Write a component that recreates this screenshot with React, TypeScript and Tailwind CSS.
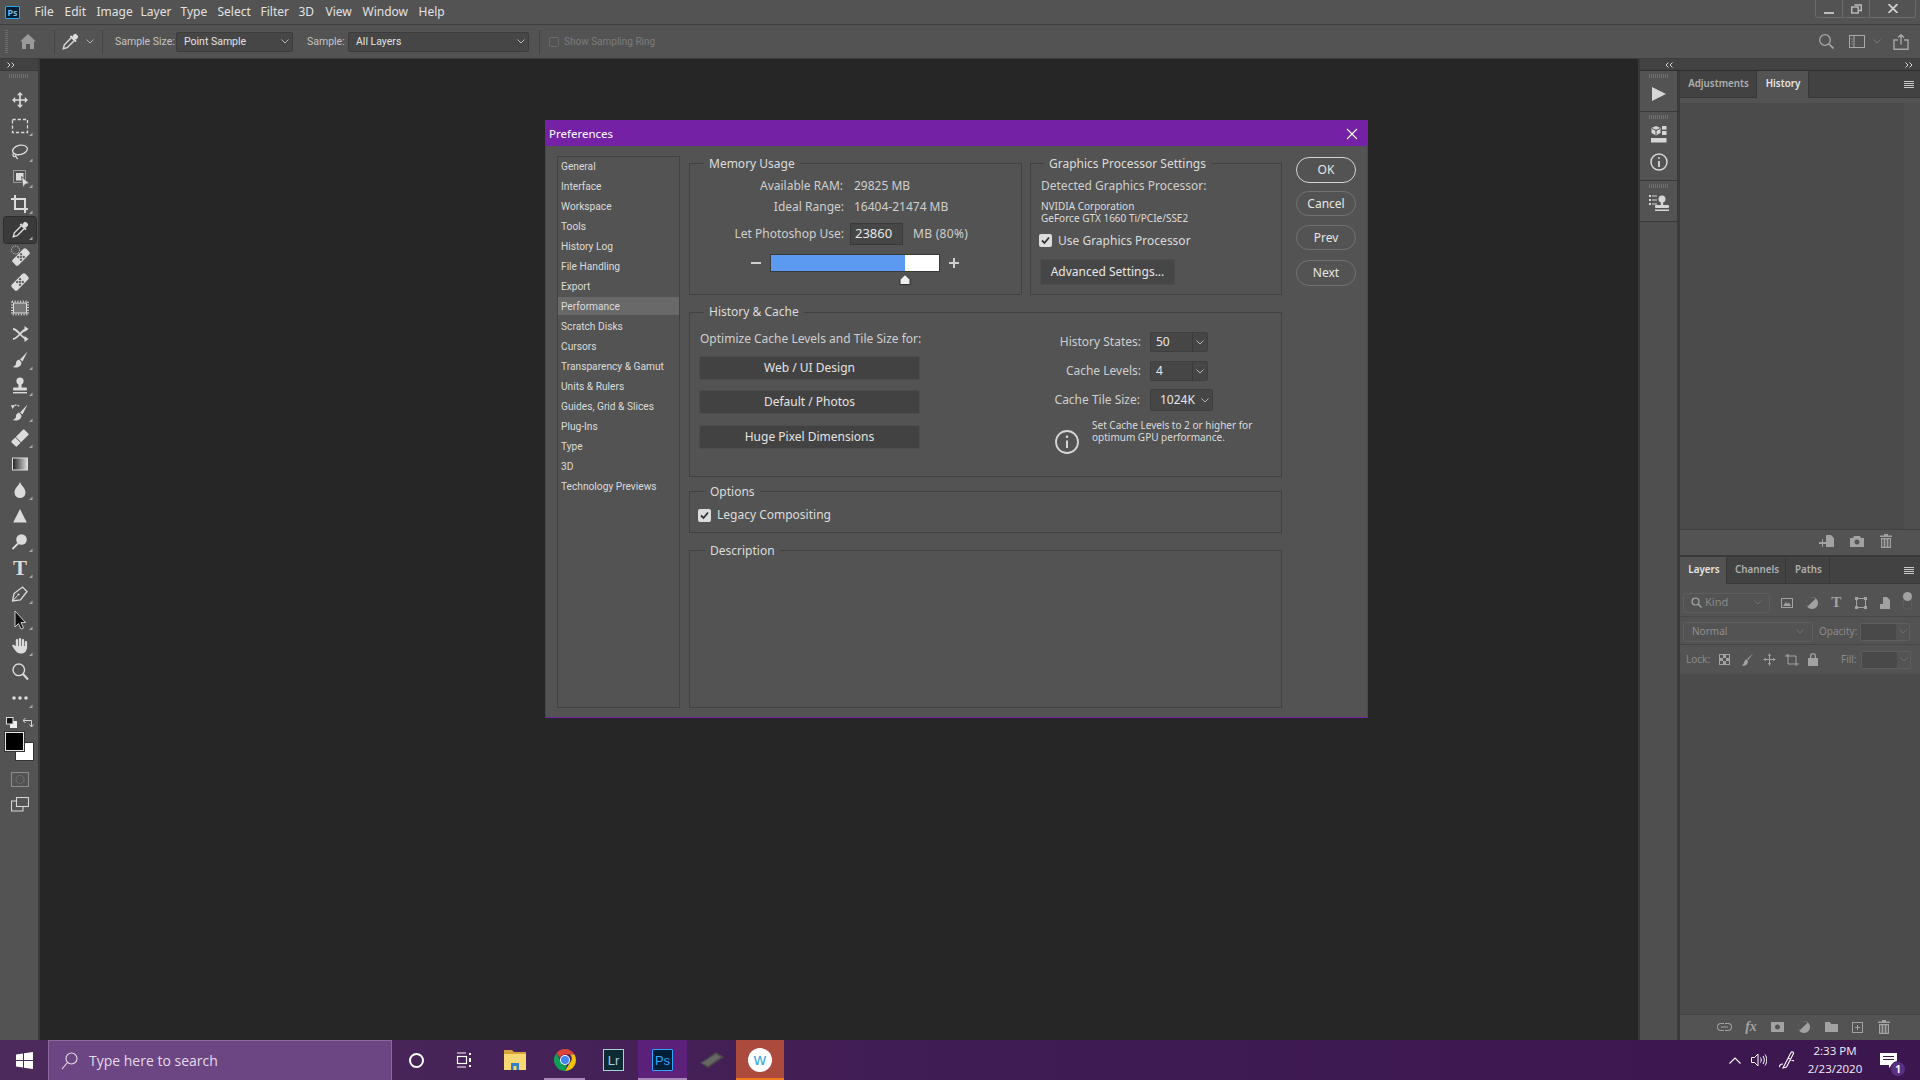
import React from "react";

const FONT = "font-['Noto_Sans','Open_Sans',sans-serif]";

const Tri = () => <path d="M12.5 6.5v3.5H9z" fill="#a8a8a8" stroke="none" />;
const Tool = ({ children, fly = true, sel = false }: { children: React.ReactNode; fly?: boolean; sel?: boolean }) => (
  <div className={`h-[26px] w-[32px] flex items-center justify-center rounded-[2px] ${sel ? "bg-[#3a3a3a] outline outline-1 outline-[#2c2c2c]" : ""}`}>
    <svg width="32" height="26" viewBox="-16 -13 32 26" fill="#dcdcdc" stroke="none">
      {children}
      {fly && <Tri />}
    </svg>
  </div>
);
const S = { stroke: "#dcdcdc", fill: "none" } as const;

const Eyedropper = () => (
  <g transform="rotate(45)">
    <rect x="-2.6" y="-10" width="5.2" height="5" rx="2" />
    <rect x="-4" y="-5.5" width="8" height="2" />
    <path d="M-2 -3.5V6L0 9.5 2 6V-3.5" {...S} strokeWidth="1.4" />
  </g>
);
const Bandage = ({ dx = 0, dy = 0 }: { dx?: number; dy?: number }) => (
  <g transform={`translate(${dx} ${dy}) rotate(-45)`}>
    <rect x="-9.5" y="-4" width="19" height="8" rx="2" />
    <g fill="#535353">
      <rect x="-3" y="-3" width="2" height="2" /><rect x="1" y="-3" width="2" height="2" />
      <rect x="-1" y="-1" width="2" height="2" />
      <rect x="-3" y="1" width="2" height="2" /><rect x="1" y="1" width="2" height="2" />
    </g>
  </g>
);
const BrushShape = () => (
  <g>
    <path d="M7.5 -8.5L2.5 1.5 0 -.5z" />
    <path d="M-1 -.5C-3.5 0-4 2-4 3.5-4 5.5-6 6.5-7.5 7-3 8.5 1.5 6.5 1.5 2.5z" />
  </g>
);

const tools: React.ReactNode[] = [
  <Tool key="move" fly={false}><path d="M0-6V6M-6 0H6" {...S} strokeWidth="1.6" /><path d="M0-8l-3 3.2h6zM0 8l-3-3.2h6zM-8 0l3.2-3v6zM8 0L4.8-3v6z" /></Tool>,
  <Tool key="marquee"><rect x="-7.5" y="-6.5" width="15" height="13" {...S} strokeWidth="1.3" strokeDasharray="3.2 2" /></Tool>,
  <Tool key="lasso"><ellipse cx=".5" cy="-2" rx="7.5" ry="4.6" transform="rotate(-14)" {...S} strokeWidth="1.3" /><path d="M-6 1c-2 1.5-1 4 1 3.5 1-.3 1-2 0-2.5M-4 4c0 1.5 1 2.5 2 3" {...S} strokeWidth="1.2" /></Tool>,
  <Tool key="object"><rect x="-6.5" y="-7.5" width="12" height="12" {...S} strokeWidth="1" strokeDasharray="1 1" /><rect x="-4" y="-5" width="7.5" height="7.5" /><path d="M1.5-1.5l8 7-4 .5-2.5 3.5z" stroke="#535353" strokeWidth=".8" /></Tool>,
  <Tool key="crop"><path d="M-5-9V5H8M-9-5H5V9" {...S} strokeWidth="2" /></Tool>,
  <Tool key="eye" sel><Eyedropper /></Tool>,
  <Tool key="heal" fly={false}><Bandage dx={1} dy={1} /><circle cx="-4.5" cy="-6" r="4" {...S} strokeWidth="1" strokeDasharray="1 1" /></Tool>,
  <Tool key="band" fly={false}><Bandage /></Tool>,
  <Tool key="patch" fly={false}><rect x="-8" y="-6.5" width="16" height="13" {...S} strokeWidth="2" strokeDasharray="1 1.700" /><rect x="-6.500" y="-5" width="13" height="10" fill="#777" stroke="#dcdcdc" strokeWidth="1" /></Tool>,
  <Tool key="shuffle" fly={false}><path d="M-7-5C-2-5 2 5 7 5M-7 5C-2 5 2-5 7-5" {...S} strokeWidth="1.8" /><path d="M8.500-5l-4-3v6zM8.500 5l-4-3v6z" /></Tool>,
  <Tool key="brush"><BrushShape /></Tool>,
  <Tool key="stamp"><circle cx="0" cy="-5" r="3.6" /><rect x="-1.600" y="-2" width="3.2" height="4" /><rect x="-7" y="1.500" width="14" height="3" rx="1" /><rect x="-7" y="6" width="14" height="1.400" /></Tool>,
  <Tool key="hist"><g transform="translate(0 1)"><BrushShape /></g><path d="M-8-5c3-3 6-2 8 0" {...S} strokeWidth="1.200" strokeDasharray="2 1" /><path d="M-9-7l4 .5-2.500 3.500z" /></Tool>,
  <Tool key="eraser"><g transform="rotate(-45)"><rect x="-9" y="-3.800" width="18" height="7.600" rx="1" /><rect x="-3" y="-4" width=".8" height="8" fill="#535353" /></g></Tool>,
  <Tool key="grad" fly={false}><defs><linearGradient id="g1"><stop offset="0" stopColor="#222" /><stop offset="1" stopColor="#ddd" /></linearGradient></defs><rect x="-7.500" y="-6" width="15" height="12" fill="url(#g1)" stroke="#dcdcdc" strokeWidth="1" /></Tool>,
  <Tool key="drop"><path d="M0-8C1.500-4 5.500-2 5.500 2.500A5.500 5.500 0 0 1-5.500 2.500C-5.500-2-1.500-4 0-8z" /></Tool>,
  <Tool key="tri" fly={false}><path d="M0-7L6.800 6.500H-6.800z" /></Tool>,
  <Tool key="dodge"><circle cx="1.500" cy="-2.500" r="5.300" /><path d="M-2 1.500L-7.500 7" {...S} strokeWidth="1.800" /></Tool>,
  <Tool key="type"><text x="0" y="7" textAnchor="middle" fontFamily="'Liberation Serif',serif" fontWeight="700" fontSize="21">T</text></Tool>,
  <Tool key="pen"><path d="M-7.500 7L-6-.500 2.500-7 7-2.500.500 6z" {...S} strokeWidth="1.300" /><path d="M-7 6.500L-2.500 1.500" {...S} strokeWidth="1" /><circle cx="-1.500" cy=".500" r="1.100" /></Tool>,
  <Tool key="arrow"><path d="M-5-9L5.500 2.500H1L3.500 8 1 9-1.500 3.500-5 7z" fill="#111" stroke="#dcdcdc" strokeWidth=".9" /></Tool>,
  <Tool key="hand"><rect x="-4.200" y="-7" width="2.300" height="9" rx="1.100" /><rect x="-1.200" y="-8" width="2.300" height="9" rx="1.100" /><rect x="1.800" y="-7" width="2.300" height="9" rx="1.100" /><rect x="4.800" y="-5" width="2.300" height="8" rx="1.100" /><path d="M-4.500 0H7C7 5 5 7.500 1 7.500-3 7.500-4 5-5.500 3.500L-8-.5C-7-2-5.500-1-4.500 0z" /></Tool>,
  <Tool key="zoom" fly={false}><circle cx="-1.200" cy="-2.200" r="5.800" {...S} strokeWidth="1.400" /><path d="M3 2l5 5.500" {...S} strokeWidth="2" /></Tool>,
  <Tool key="dots"><circle cx="-6" cy="0" r="1.800" /><circle cx="0" cy="0" r="1.800" /><circle cx="6" cy="0" r="1.800" /></Tool>,
];

const menu: [string, string][] = [
  ["File", "w-[30px]"], ["Edit", "w-[32px]"], ["Image", "w-[44px]"], ["Layer", "w-[40px]"], ["Type", "w-[37px]"], ["Select", "w-[43px]"],
  ["Filter", "w-[38px]"], ["3D", "w-[27px]"], ["View", "w-[37px]"], ["Window", "w-[56px]"], ["Help", "w-[30px]"],
];

const prefs = ["General", "Interface", "Workspace", "Tools", "History Log", "File Handling", "Export", "Performance", "Scratch Disks", "Cursors", "Transparency & Gamut", "Units & Rulers", "Guides, Grid & Slices", "Plug-Ins", "Type", "3D", "Technology Previews"];

const Chev = ({ c = "#b5b5b5" }: { c?: string }) => (
  <svg width="8" height="5" viewBox="0 0 8 5" fill="none" stroke={c} strokeWidth="1"><path d="M.5.5L4 4 7.500.5" /></svg>
);

const Group = ({ title, lg, className, children }: { title: string; lg: string; className: string; children?: React.ReactNode }) => (
  <fieldset className={`border border-[#424242] min-w-0 ${className}`}>
    <legend className={`px-[5px] h-[16px] leading-[16px] text-[12px] text-[#dcdcdc] ${lg}`}>{title}</legend>
    {children}
  </fieldset>
);

const Check = () => (
  <span className="w-[13px] h-[13px] rounded-[2px] bg-[#dcdcdc] flex items-center justify-center shrink-0">
    <svg width="9" height="9" viewBox="0 0 9 9" fill="none" stroke="#333" strokeWidth="1.800"><path d="M1 4.500L3.500 7 8 1.500" /></svg>
  </span>
);

const PrefBtn = ({ t, cls }: { t: string; cls: string }) => (
  <div className={`w-[221px] h-[24px] rounded-[2px] bg-[#424242] border border-[#4d4d4d] flex items-center justify-center text-[12px] text-[#e2e2e2] ${cls}`}>{t}</div>
);

const SideBtn = ({ t, ok, cls }: { t: string; ok?: boolean; cls: string }) => (
  <div className={`w-[60px] rounded-full flex items-center justify-center text-[12px] text-[#e6e6e6] ${ok ? "border-[1.5px] border-[#d4d4d4]" : "border border-[#727272]"} ${cls}`}>{t}</div>
);

const Combo = ({ v, split, cls }: { v: string; split?: boolean; cls: string }) => (
  <div className={`bg-[#464646] border border-[#3f3f3f] rounded-[2px] flex items-center text-[12px] text-[#e6e6e6] ${cls}`}>
    {split ? (
      <>
        <span className="flex-1 pl-[5px]">{v}</span>
        <span className="w-[15px] h-full border-l border-[#3a3a3a] flex items-center justify-center"><Chev /></span>
      </>
    ) : (
      <>
        <span className="flex-1 pl-[9px]">{v}</span>
        <span className="pr-[3px]"><Chev /></span>
      </>
    )}
  </div>
);

const Dialog = () => (
  <div className="absolute left-[545px] top-[120px] w-[823px] h-[598px] bg-[#535353] border border-[#7421a6] flex flex-col text-[#d4d4d4]">
    <div className="h-[25px] bg-[#7421a6] flex items-center justify-between pl-[3px] pr-[9px] text-[11.500px] text-white shrink-0">
      <span>Preferences</span>
      <svg width="12" height="12" viewBox="0 0 12 12" stroke="#fff" strokeWidth="1.100"><path d="M1 1l10 10M11 1L1 11" /></svg>
    </div>
    <div className="flex pl-[11px] pt-[9px]">
      <div className="mt-[1px] w-[123px] h-[552px] border border-[#424242] shrink-0 font-['Roboto',sans-serif]">
        {prefs.map((p) => (
          <div key={p} className="h-[20px]">
            <div className={`h-[18px] pl-[3px] pt-[2px] flex items-center whitespace-nowrap text-[10.200px] text-[#dcdcdc] ${p === "Performance" ? "bg-[#696969]" : ""}`}>{p}</div>
          </div>
        ))}
      </div>
      <div className="ml-[9px] w-[593px] flex flex-col">
        <div className="flex gap-[8px]">
          <Group title="Memory Usage" lg="ml-[14px] translate-y-[1px]" className="w-[333px] h-[140px]">
            <div className="pt-[5px] text-[12px] text-[#cfcfcf]">
              <div className="flex h-[20px] items-center"><span className="w-[153px] text-right">Available RAM:</span><span className="ml-[11px]">29825 MB</span></div>
              <div className="flex h-[20px] items-center mt-[1px]"><span className="w-[154px] text-right">Ideal Range:</span><span className="ml-[10px]">16404-21474 MB</span></div>
              <div className="flex h-[22px] items-center mt-[6px]">
                <span className="w-[154px] text-right">Let Photoshop Use:</span>
                <span className="ml-[6px] w-[53px] h-[22px] bg-[#464646] border border-[#3a3a3a] pl-[4px] flex items-center text-[13px] text-[#e8e8e8]">23860</span>
                <span className="ml-[10px] tracking-[0.3px]">MB (80%)</span>
              </div>
              <div className="flex h-[18px] items-center mt-[9px] ml-[61px]">
                <span className="w-[10px] h-[2px] bg-[#cfcfcf]" />
                <div className="ml-[9px] w-[170px] h-[18px] bg-white border border-[#3a3a3a]"><div className="w-[134px] h-full bg-[#5b9af0]" /></div>
                <svg className="ml-[9px]" width="10" height="10" viewBox="0 0 10 10" fill="#cfcfcf"><path d="M4 0h2v4h4v2H6v4H4V6H0V4h4z" /></svg>
              </div>
              <svg className="ml-[209px] mt-[2px]" width="12" height="11" viewBox="0 0 12 11" fill="#eee" stroke="#2f2f2f"><path d="M6 .5L11 5.500V10.500H1V5.500z" /></svg>
            </div>
          </Group>
          <Group title="Graphics Processor Settings" lg="ml-[13px] translate-y-[1px]" className="w-[252px] h-[140px]">
            <div className="pt-[5px] pl-[10px] text-[12px] text-[#cfcfcf]">
              <div className="h-[20px] flex items-center">Detected Graphics Processor:</div>
              <div className="mt-[4px] text-[10px] leading-[12px] text-[#dcdcdc]">NVIDIA Corporation<br />GeForce GTX 1660 Ti/PCIe/SSE2</div>
              <div className="mt-[10px] ml-[-2px] h-[13px] flex items-center gap-[6px]"><Check /><span className="text-[#dcdcdc]">Use Graphics Processor</span></div>
              <div className="mt-[12px] ml-[-1px] w-[135px] h-[26px] bg-[#464646] border border-[#4d4d4d] rounded-[2px] flex items-center justify-center text-[#e6e6e6]">Advanced Settings...</div>
            </div>
          </Group>
        </div>
        <Group title="History & Cache" lg="ml-[14px]" className="mt-[9px] h-[173px]">
          <div className="flex text-[12px] text-[#cfcfcf]">
            <div className="w-[230px] shrink-0 pl-[9px] pt-[9px]">
              <div className="h-[20px] flex items-center pl-[1px] whitespace-nowrap">Optimize Cache Levels and Tile Size for:</div>
              <PrefBtn t="Web / UI Design" cls="mt-[7px]" />
              <PrefBtn t="Default / Photos" cls="mt-[10px]" />
              <PrefBtn t="Huge Pixel Dimensions" cls="mt-[11px]" />
            </div>
            <div className="pl-[10px] pt-[12px] flex-1">
              <div className="flex items-center h-[20px]"><span className="w-[211px] text-right">History States:</span><Combo v="50" split cls="ml-[9px] w-[58px] h-[20px]" /></div>
              <div className="flex items-center h-[20px] mt-[9px]"><span className="w-[211px] text-right">Cache Levels:</span><Combo v="4" split cls="ml-[9px] w-[58px] h-[20px]" /></div>
              <div className="flex items-center h-[22px] mt-[8px]"><span className="w-[210px] text-right">Cache Tile Size:</span><Combo v="1024K" cls="ml-[10px] w-[63px] h-[22px]" /></div>
              <div className="flex mt-[8px] ml-[125px]">
                <svg className="mt-[11px]" width="24" height="24" viewBox="0 0 24 24" fill="none" stroke="#d6d6d6" strokeWidth="1.800"><circle cx="12" cy="12" r="11" /><path d="M12 10.500V18" strokeWidth="2" /><circle cx="12" cy="6.800" r="1.300" fill="#d6d6d6" stroke="none" /></svg>
                <div className="ml-[13px] text-[10px] leading-[12px] text-[#dcdcdc] whitespace-nowrap">Set Cache Levels to 2 or higher for<br />optimum GPU performance.</div>
              </div>
            </div>
          </div>
        </Group>
        <Group title="Options" lg="ml-[15px] translate-y-[1px]" className="mt-[6px] h-[50px]">
          <div className="pt-[9px] pl-[8px] h-[23px] flex items-center gap-[6px] text-[12px] text-[#dcdcdc]"><Check /><span>Legacy Compositing</span></div>
        </Group>
        <Group title="Description" lg="ml-[15px] translate-y-[1px]" className="mt-[9px] h-[166px]" />
      </div>
      <div className="ml-[14px] pt-[2px] flex flex-col">
        <SideBtn t="OK" ok cls="h-[26px]" />
        <SideBtn t="Cancel" cls="h-[25px] mt-[8px]" />
        <SideBtn t="Prev" cls="h-[25px] mt-[9px]" />
        <SideBtn t="Next" cls="h-[26px] mt-[10px]" />
      </div>
    </div>
  </div>
);

const Dbl = ({ left }: { left?: boolean }) => (
  <svg width="8" height="6" viewBox="0 0 8 6" fill="none" stroke="#d8d8d8" strokeWidth="1"><path d={left ? "M3.500.5L1 3l2.500 2.500M7.500.5L5 3l2.500 2.500" : "M.5.5L3 3 .5 5.500M4.500.5L7 3 4.500 5.500"} /></svg>
);
const Grip = ({ cls = "" }: { cls?: string }) => (
  <div className={`h-[4px] w-[20px] bg-[repeating-linear-gradient(90deg,#6f6f6f_0,#6f6f6f_1px,transparent_1px,transparent_2px)] ${cls}`} />
);

const Mini = ({ children, w = 16, h = 16, vb }: { children: React.ReactNode; w?: number; h?: number; vb?: string }) => (
  <svg width={w} height={h} viewBox={vb ?? `0 0 ${w} ${h}`} fill="#a2a2a2" stroke="none">{children}</svg>
);
const Trash = () => (
  <Mini w={12} h={14}><path d="M4 0h4v1.500h4V3H0V1.500h4zM1 4h10v10H1zM2.200 5.200v7.600h1.400V5.200zM5.300 5.200v7.600h1.400V5.200zM8.400 5.200v7.600h1.400V5.200z" fillRule="evenodd" /></Mini>
);
const Cell = ({ children }: { children: React.ReactNode }) => (
  <span className="w-[26.700px] flex items-center justify-center">{children}</span>
);
const KCell = ({ children }: { children: React.ReactNode }) => (
  <span className="w-[24.500px] flex items-center justify-center">{children}</span>
);
const Burger = () => (
  <svg width="10" height="7" viewBox="0 0 10 7" fill="#c8c8c8"><path d="M0 0h10v1H0zM0 2h10v1H0zM0 4h10v1H0zM0 6h10v1H0z" /></svg>
);

const RightPanels = () => (
  <div className="w-[282px] shrink-0 flex flex-col bg-[#2e2e2e] border-l-2 border-[#383838]">
    <div className="h-[11px] bg-[#424242] flex items-center justify-between pl-[25px] pr-[7px] shrink-0"><Dbl left /><Dbl /></div>
    <div className="flex flex-1 min-h-0 pt-[1px]">
      <div className="w-[37px] shrink-0 flex flex-col bg-[#3a3a3a]">
        <div className="h-[40px] bg-[#535353] flex flex-col items-center pt-[3px]">
          <Grip />
          <svg className="mt-[9px]" width="14" height="14" viewBox="0 0 14 14" fill="#d6d6d6"><path d="M0 0l14 7L0 14z" /></svg>
        </div>
        <div className="mt-[1px] h-[68px] bg-[#535353] flex flex-col items-center pt-[3px]">
          <Grip />
          <svg className="mt-[7px]" width="16" height="17" viewBox="0 0 16 17" fill="#d6d6d6"><path d="M5 0l4.500 2v5L5 9.500.5 7V2z" /><path d="M5 3.500V9M1 2.500L5 4.500 9 2.500" stroke="#535353" fill="none" /><rect x="11" y="0" width="4.500" height="3.600" /><rect x="11" y="5" width="4.500" height="4" /><rect x="0" y="12" width="15.500" height="4.500" /></svg>
          <svg className="mt-[10px]" width="18" height="18" viewBox="0 0 18 18" fill="none" stroke="#d6d6d6" strokeWidth="1.500"><circle cx="9" cy="9" r="8" /><path d="M9 8v6" strokeWidth="1.800" /><circle cx="9" cy="5" r="1" fill="#d6d6d6" stroke="none" /></svg>
        </div>
        <div className="mt-[1px] h-[40px] bg-[#535353] flex flex-col items-center pt-[3px]">
          <Grip />
          <svg className="mt-[7px]" width="20" height="17" viewBox="0 0 20 17" fill="#d6d6d6"><path d="M0 0h2v2H0zM0 4h2v2H0zM0 8h2v2H0zM3 .5h5v1H3zM3 4.500h5v1H3zM3 8.500h5v1H3z" /><circle cx="13" cy="4" r="3.500" /><rect x="11.800" y="6" width="2.400" height="4" /><rect x="6" y="10" width="14" height="3" rx="1" /><rect x="6" y="14.500" width="14" height="1.500" /></svg>
        </div>
        <div className="mt-[1px] flex-1 bg-[#4f4f4f]" />
      </div>
      <div className="w-[3px] bg-[#3a3a3a] shrink-0" />
      <div className="flex-1 flex flex-col min-w-0 text-[9.800px] font-semibold text-[#b0b0b0]">
        <div className="h-[27px] bg-[#424242] flex shrink-0">
          <div className="w-[77px] pl-[1px] flex items-center justify-center border-r border-[#383838] border-b">Adjustments</div>
          <div className="w-[52px] pl-[1px] flex items-center justify-center bg-[#535353] text-[#e6e6e6] border-r border-[#383838]">History</div>
          <div className="flex-1 border-b border-[#383838] flex items-center justify-end pr-[6px]"><Burger /></div>
        </div>
        <div className="h-[5px] bg-[#535353] shrink-0" />
        <div className="h-[426px] bg-[#4b4b4b] flex justify-end shrink-0"><div className="w-[16px] h-full bg-[#4f4f4f]" /></div>
        <div className="h-[26px] bg-[#535353] border-t border-[#404040] flex items-center justify-end pr-[28px] pb-[3px] gap-[16px] shrink-0">
          <Mini w={15} h={12}><path d="M7 0h5l3 3v9H7V9H4v3H3V9H0V7h3V4h1v3h3z" /></Mini>
          <Mini w={14} h={11}><path d="M4 0h6l1 2h3v9H0V2h3zM7 3.500a2.500 2.500 0 1 0 .01 0z" fillRule="evenodd" /></Mini>
          <Trash />
        </div>
        <div className="h-[2px] bg-[#3a3a3a] shrink-0" />
        <div className="h-[27px] bg-[#424242] flex shrink-0">
          <div className="w-[47px] pl-[2px] flex items-center justify-center bg-[#535353] text-[#e6e6e6] border-r border-[#383838]">Layers</div>
          <div className="w-[59px] pl-[2px] flex items-center justify-center border-r border-[#383838] border-b">Channels</div>
          <div className="w-[44px] pl-[2px] flex items-center justify-center border-r border-[#383838] border-b">Paths</div>
          <div className="flex-1 border-b border-[#383838] flex items-center justify-end pr-[6px]"><Burger /></div>
        </div>
        <div className="h-[33px] bg-[#535353] border-b border-[#484848] flex items-center pl-[3px] pt-[5px] shrink-0 font-normal text-[#8a8a8a]">
          <div className="w-[87px] h-[20px] border border-[#5e5e5e] rounded-[3px] flex items-center px-[7px] gap-[3px]">
            <svg width="11" height="11" viewBox="0 0 11 11" fill="none" stroke="#a8a8a8" strokeWidth="1.200"><circle cx="4.500" cy="4.500" r="3.500" /><path d="M7 7l3.500 3.500" /></svg>
            <span className="flex-1 text-[11px]">Kind</span><Chev c="#6f6f6f" />
          </div>
          <div className="ml-[5px] flex items-center">
            <KCell><Mini w={12} h={10}><path d="M0 0h12v10H0zM1 1v8h10V1zM2 8l3-4 1.500 2L8 4.500 10 8z" fillRule="evenodd" /></Mini></KCell>
            <KCell><Mini w={12} h={12}><path d="M6 0a6 6 0 1 0 .01 0zM1.500 9.500L9.500 1.800A4.800 4.800 0 0 0 1.500 9.500z" fillRule="evenodd" /></Mini></KCell>
            <KCell><span className="font-['Liberation_Serif',serif] font-bold text-[15px] leading-none text-[#a2a2a2]">T</span></KCell>
            <KCell><Mini w={12} h={12}><path d="M0 0h3v1h6V0h3v3h-1v6h1v3H9v-1H3v1H0V9h1V3H0zM2 3v6h1v1h6V9h1V3H9V2H3v1z" fillRule="evenodd" /></Mini></KCell>
            <KCell><Mini w={10} h={12}><path d="M3 0h4l3 3v9H5V7H3zM0 7h5v5H0z" /></Mini></KCell>
            <div className="ml-[5px] w-[9px] h-[18px] -mt-[4px] rounded-full border border-[#5e5e5e] relative"><span className="absolute left-[-1px] top-[-1px] w-[9px] h-[9px] rounded-full bg-[#a2a2a2]" /></div>
          </div>
        </div>
        <div className="h-[28px] bg-[#535353] border-b border-[#484848] flex items-center pl-[3px] pt-[2px] shrink-0 font-normal text-[10px] text-[#8a8a8a]">
          <div className="w-[130px] h-[20px] border border-[#5e5e5e] rounded-[3px] flex items-center justify-between px-[8px] text-[#8f8f8f]"><span>Normal</span><Chev c="#6f6f6f" /></div>
          <span className="ml-[6px] w-[41px]">Opacity:</span>
          <div className="w-[50px] h-[18px] border border-[#5e5e5e] rounded-[2px] flex"><span className="w-[35px] bg-[#494949]" /><span className="flex-1 flex items-center justify-center"><Chev c="#6f6f6f" /></span></div>
        </div>
        <div className="h-[29px] bg-[#535353] flex items-center pl-[6px] shrink-0 font-normal text-[10px] text-[#8a8a8a]">
          <span className="w-[33px]">Lock:</span>
          <Mini w={11} h={11}><path d="M0 0h11v11H0zM1 1v3h3V1zM7 1v3h3V1zM4 4v3h3V4zM1 7v3h3V7zM7 7v3h3V7z" fillRule="evenodd" /></Mini>
          <span className="ml-[12px] flex"><Mini w={12} h={13}><path d="M11.500 0L6 7l-1-1zM4.500 6.500c-2 0-2 2.500-2.500 3.500L0 12.500c3 1 6-1 6-4.500z" /></Mini></span>
          <span className="ml-[9px] flex"><Mini w={13} h={13}><path d="M6 3v3H3V5L0 6.500 3 8V7h3v3H5l1.500 3L8 10H7V7h3v1l3-1.500L10 5v1H7V3h1L6.500 0 5 3z" /></Mini></span>
          <span className="ml-[9px] flex"><Mini w={14} h={13}><path d="M2 3V1.500M0 3h11v10M3 1v10h11" fill="none" stroke="#a2a2a2" /></Mini></span>
          <span className="ml-[9px] flex"><Mini w={10} h={13}><path d="M2 5V3a3 3 0 0 1 6 0v2h2v8H0V5zM3.300 5h3.400V3a1.700 1.700 0 0 0-3.400 0z" fillRule="evenodd" /></Mini></span>
          <span className="ml-[23px] w-[20px]">Fill:</span>
          <div className="w-[50px] h-[18px] border border-[#5e5e5e] rounded-[2px] flex"><span className="w-[35px] bg-[#494949]" /><span className="flex-1 flex items-center justify-center"><Chev c="#6f6f6f" /></span></div>
        </div>
        <div className="flex-1 bg-[#4b4b4b]" />
        <div className="h-[26px] bg-[#535353] border-t border-[#454545] flex items-center shrink-0 pl-[31px] pb-[1px]">
          <Cell><Mini w={15} h={8}><path d="M4 0h3v1H4a3 3 0 0 0 0 6h3v1H4a4 4 0 0 1 0-8zM8 0h3a4 4 0 0 1 0 8H8V7h3a3 3 0 0 0 0-6H8zM4 3.500h7v1H4z" /></Mini></Cell>
          <Cell><span className="font-['Liberation_Serif',serif] italic text-[14px] leading-none text-[#a2a2a2]">fx</span></Cell>
          <Cell><Mini w={13} h={10}><path d="M0 0h13v10H0zM6.500 2.500a2.500 2.500 0 1 0 .01 0z" fillRule="evenodd" /></Mini></Cell>
          <Cell><Mini w={12} h={12}><path d="M6 0a6 6 0 1 0 .01 0zM1.500 9.500L9.500 1.800A4.800 4.800 0 0 0 1.500 9.500z" fillRule="evenodd" /></Mini></Cell>
          <Cell><Mini w={13} h={10}><path d="M0 0h5l1 2h7v8H0z" /></Mini></Cell>
          <Cell><Mini w={11} h={11}><path d="M0 0h11v11H0zM1 1v9h9V1zM5 3h1v2h2v1H6v2H5V6H3V5h2z" fillRule="evenodd" /></Mini></Cell>
          <Cell><Trash /></Cell>
        </div>
      </div>
    </div>
  </div>
);

const Taskbar = () => (
  <div className="h-[40px] shrink-0 flex bg-gradient-to-r from-[#4d2a5c] via-[#401c54] to-[#3c174f] text-white">
    <div className="w-[48px] flex items-center justify-center">
      <svg width="17" height="17" viewBox="0 0 17 17" fill="#fff"><path d="M0 2.400L7 1.400V8H0zM8 1.300L17 0V8H8zM0 9H7V15.600L0 14.600zM8 9H17V17L8 15.700z" /></svg>
    </div>
    <div className="w-[344px] bg-[#6c4583] border-l border-t border-r border-[#8a6a9c] flex items-center pl-[12px] gap-[11px] font-['Open_Sans',sans-serif] text-[14px] text-[#e4dbe9]">
      <svg width="17" height="18" viewBox="0 0 17 18" fill="none" stroke="#e8e0ec" strokeWidth="1.100"><circle cx="10.500" cy="6.500" r="5.500" /><path d="M6.500 10.500L1 17" /></svg>
      <span>Type here to search</span>
    </div>
    <div className="w-[49px] flex items-center justify-center"><span className="w-[15px] h-[15px] rounded-full border-2 border-white" /></div>
    <div className="w-[49px] flex items-center justify-center pr-[3px]">
      <svg width="16" height="16" viewBox="0 0 16 16" fill="none" stroke="#fff" strokeWidth="1.200"><path d="M1 1h9M1 15h9" /><rect x="1.500" y="4.500" width="9" height="7" /><path d="M14 1v2M14 6v4M14 13v2" strokeWidth="2" /></svg>
    </div>
    <div className="w-[50px] flex items-center justify-center">
      <svg width="22" height="20" viewBox="0 0 22 20"><path d="M0 0h8l2 2h12v4H0z" fill="#d9a53a" /><rect x="0" y="4" width="22" height="16" fill="#f8d775" /><path d="M7 20v-7h8v7h-2.500v-4h-3v4z" fill="#2f7fc4" /></svg>
    </div>
    <div className="w-[49px] flex items-center justify-center relative">
      <svg width="22" height="22" viewBox="0 0 22 22">
        <path d="M11 0a11 11 0 0 1 9.500 5.500H11a5.500 5.500 0 0 0-5 3.300L2.400 4.200A11 11 0 0 1 11 0z" fill="#db4437" />
        <path d="M20.500 5.500A11 11 0 0 1 11 22l4.800-8.200a5.500 5.500 0 0 0 .2-8.300z" fill="#f4c20d" />
        <path d="M2.400 4.200L7 12.500a5.500 5.500 0 0 0 6 3.700L11 22A11 11 0 0 1 2.400 4.200z" fill="#0f9d58" />
        <circle cx="11" cy="11" r="5" fill="#fff" /><circle cx="11" cy="11" r="4" fill="#4285f4" />
      </svg>
      <span className="absolute bottom-0 left-[4px] right-[4px] h-[2px] bg-[#a988ba]" />
    </div>
    <div className="w-[49px] flex items-center justify-center">
      <span className="w-[21px] h-[22px] border border-[#a8d0dc] bg-[#0e2a33] flex items-center justify-center text-[13px] leading-none text-[#a8d0dc] font-['Liberation_Sans',sans-serif]">Lr</span>
    </div>
    <div className="w-[49px] flex items-center justify-center bg-[#5b207a] relative">
      <span className="w-[21px] h-[22px] border border-[#31a8ff] rounded-[1px] bg-[#001e36] flex items-center justify-center text-[13px] leading-none text-[#31a8ff] font-['Liberation_Sans',sans-serif]">Ps</span>
      <span className="absolute bottom-0 left-0 right-0 h-[2px] bg-[#a988ba]" />
    </div>
    <div className="w-[49px] flex items-center justify-center">
      <svg width="24" height="16" viewBox="0 0 24 16"><path d="M0 11L16 0l8 5-16 11z" fill="#4a4a4a" /><path d="M2 11L16 2l5 3L8 14z" fill="#666" /></svg>
    </div>
    <div className="w-[48px] flex items-center justify-center bg-[#ad4a3e] relative">
      <span className="w-[24px] h-[24px] rounded-full bg-white flex items-center justify-center text-[17px] leading-none text-[#2fa9e0] font-['Liberation_Sans',sans-serif] pb-[2px]">w</span>
      <span className="absolute bottom-0 left-0 right-0 h-[2px] bg-[#ee7a1d]" />
    </div>
    <div className="flex-1" />
    <div className="w-[24px] flex items-center justify-center"><svg width="12" height="7" viewBox="0 0 12 7" fill="none" stroke="#fff" strokeWidth="1.100"><path d="M.5 6.500L6 1l5.500 5.500" /></svg></div>
    <div className="w-[24px] flex items-center justify-center">
      <svg width="16" height="14" viewBox="0 0 16 14" fill="none" stroke="#fff" strokeWidth="1"><path d="M.5 4.500h3L7 1v12L3.500 9.500h-3z" /><path d="M9.500 4.500c1 1.500 1 3.500 0 5M12 3c1.700 2.500 1.700 5.500 0 8M14 1.500c2.300 3 2.300 8 0 11" /></svg>
    </div>
    <div className="w-[32px] flex items-center justify-center">
      <svg width="17" height="18" viewBox="0 0 17 18" fill="none" stroke="#fff" strokeWidth="1.100"><path d="M5 15L12 1.500c1-1.500 3 0 2.500 1L7.500 16 4 17zM9 7l6 3M4 13c-3 0-4 2-3 3" /></svg>
    </div>
    <div className="w-[64px] flex flex-col items-center justify-center font-['Open_Sans',sans-serif] text-[11.500px] leading-[18px] text-[#f2edf5] whitespace-nowrap">
      <span>2:33 PM</span>
      <span>2/23/2020</span>
    </div>
    <div className="w-[42px] flex items-center justify-center relative">
      <svg width="17" height="15" viewBox="0 0 17 15" fill="#fff"><path d="M0 0h17v12h-5l-3 3v-3H0z" /><path d="M3 3h11v1H3zM3 6h11v1H3z" fill="#3c174f" /></svg>
      <span className="absolute left-[23px] top-[21px] w-[16px] h-[16px] rounded-full bg-[#5a2f86] border border-[#3c174f] flex items-center justify-center text-[10px] font-bold leading-none text-white">1</span>
    </div>
    <div className="w-[11px]" />
  </div>
);

export default function App() {
  return (
    <div className={`relative w-[1920px] h-[1080px] overflow-hidden flex flex-col bg-[#262626] ${FONT}`}>
      <div className="h-[25px] shrink-0 bg-[#535353] border-b border-[#3d3d3d] flex items-center pl-[5px] pr-[4px] text-[12px] text-[#e2e2e2]">
        <span className="w-[15px] h-[13px] border border-[#2fa8e8] rounded-[1px] bg-[#001e36] flex items-center justify-center text-[9px] leading-none text-[#7cc8ef] font-semibold">Ps</span>
        <div className="ml-[14.500px] flex">
          {menu.map(([t, w]) => <span key={t} className={w}>{t}</span>)}
        </div>
        <div className="ml-auto self-start w-[101px] h-[18px] border border-t-0 border-[#6a6a6a] rounded-b-[3px] flex items-center">
          <span className="w-[27px] h-full border-r border-[#6a6a6a] flex items-end justify-center pb-[3px]"><span className="w-[10px] h-[2px] bg-[#bcbcbc]" /></span>
          <span className="w-[27px] h-full border-r border-[#6a6a6a] flex items-center justify-center">
            <svg width="11" height="10" viewBox="0 0 11 10" fill="none" stroke="#bcbcbc" strokeWidth="1.400"><rect x=".7" y="3" width="6.500" height="6" /><path d="M3.500 1H10.300V6.500H7.500" /></svg>
          </span>
          <span className="flex-1 flex items-center justify-center">
            <svg width="10" height="9" viewBox="0 0 10 9" fill="none" stroke="#d0d0d0" strokeWidth="1.800"><path d="M.5 0l9 9M9.500 0l-9 9" /></svg>
          </span>
        </div>
      </div>
      <div className="h-[34px] shrink-0 bg-[#535353] border-b border-[#3d3d3d] flex items-center font-['Roboto',sans-serif] text-[10.500px] text-[#c4c4c4] whitespace-nowrap">
        <div className="ml-[5px] h-[24px] w-[3px] bg-[repeating-linear-gradient(180deg,#6f6f6f_0,#6f6f6f_1px,transparent_1px,transparent_2px)]" />
        <svg className="ml-[12px]" width="16" height="15" viewBox="0 0 16 15" fill="#9a9a9a"><path d="M8 0l8 7.500h-2V15h-4v-5H6v5H2V7.500H0z" /></svg>
        <span className="ml-[18px] w-[1px] h-[24px] bg-[#454545]" />
        <svg className="ml-[2px]" width="26" height="26" viewBox="-13 -13 26 26" fill="#dcdcdc" stroke="none"><Eyedropper /></svg>
        <span className="ml-[3px] flex"><Chev /></span>
        <span className="ml-[8px] w-[1px] h-[24px] bg-[#454545]" />
        <span className="ml-[12px] w-[61px]">Sample Size:</span>
        <div className="w-[117px] h-[20px] bg-[#464646] border border-[#3c3c3c] rounded-[2px] flex items-center justify-between pl-[7px] pr-[3px] text-[#e2e2e2]"><span>Point Sample</span><Chev /></div>
        <span className="ml-[14px] w-[41px]">Sample:</span>
        <div className="w-[181px] h-[20px] bg-[#464646] border border-[#3c3c3c] rounded-[2px] flex items-center justify-between pl-[7px] pr-[3px] text-[#e2e2e2]"><span>All Layers</span><Chev /></div>
        <span className="ml-[10px] w-[1px] h-[24px] bg-[#454545]" />
        <span className="ml-[9px] w-[10px] h-[10px] border border-[#696969] rounded-[2px]" />
        <span className="ml-[5px] text-[10px] text-[#7b7b7b]">Show Sampling Ring</span>
        <div className="ml-auto flex items-center text-[#a8a8a8]">
          <svg width="15" height="15" viewBox="0 0 15 15" fill="none" stroke="#a8a8a8" strokeWidth="1.300"><circle cx="6" cy="6" r="5.300" /><path d="M10 10l4.500 4.500" strokeWidth="1.600" /></svg>
          <svg className="ml-[15px]" width="16" height="13" viewBox="0 0 16 13" fill="none" stroke="#a8a8a8" strokeWidth="1"><rect x=".5" y=".5" width="15" height="12" /><path d="M5 1v11M2.500 4h1M2.500 6.500h1M2.500 9h1" /></svg>
          <span className="ml-[8px] opacity-40 flex"><Chev /></span>
          <svg className="ml-[12px] mr-[11px]" width="16" height="16" viewBox="0 0 16 16" fill="none" stroke="#a8a8a8" strokeWidth="1.400"><path d="M5 6H1V15.300H15V6H11M8 10.500V1M5 3.500L8 .8 11 3.500" /></svg>
        </div>
      </div>
      <div className="flex-1 flex min-h-0">
        <div className="w-[40px] shrink-0 flex flex-col bg-[#3a3a3a]">
          <div className="w-[38px] h-[11px] bg-[#424242] flex items-center pl-[7px] shrink-0"><Dbl /></div>
          <div className="mt-[1px] w-[38px] flex-1 bg-[#535353] flex flex-col items-center">
            <Grip cls="mt-[3px]" />
            <div className="mt-[9px] ml-[1px] flex flex-col items-center">{tools}</div>
            <div className="w-[32px] h-[14px] mt-[4px] flex items-center justify-between px-[2px] ml-[1px]">
              <svg width="11" height="11" viewBox="0 0 11 11"><rect x="4" y="4" width="7" height="7" fill="#eee" /><rect x=".5" y=".5" width="6.500" height="6.500" fill="#111" stroke="#ddd" /></svg>
              <svg width="11" height="11" viewBox="0 0 11 11" fill="none" stroke="#d6d6d6"><path d="M0 3.500h8.500v6M2.500 1L0 3.500 2.500 6M6.500 7.500l2 2.500 2-2.500" /></svg>
            </div>
            <div className="relative w-[29px] h-[29px] mt-[3px]">
              <span className="absolute right-[0px] bottom-[0px] w-[19px] h-[19px] bg-white border border-[#333]" />
              <span className="absolute left-0 top-0 w-[19px] h-[19px] bg-black border border-[#e4e4e4] outline outline-1 outline-[#333]" />
            </div>
            <svg className="mt-[11px] ml-[1px]" width="18" height="15" viewBox="0 0 18 15" fill="none" stroke="#8d8d8d"><rect x=".5" y=".5" width="17" height="14" /><circle cx="9" cy="7.500" r="4" strokeDasharray="1 1" /></svg>
            <svg className="mt-[10px] ml-[1px]" width="18" height="15" viewBox="0 0 18 15" fill="none" stroke="#d6d6d6" strokeWidth="1.100"><rect x="5.500" y=".5" width="12" height="9" /><path d="M5 4H.5V14H12V10" /></svg>
          </div>
        </div>
        <div className="flex-1" />
        <RightPanels />
      </div>
      <Taskbar />
      <Dialog />
    </div>
  );
}
